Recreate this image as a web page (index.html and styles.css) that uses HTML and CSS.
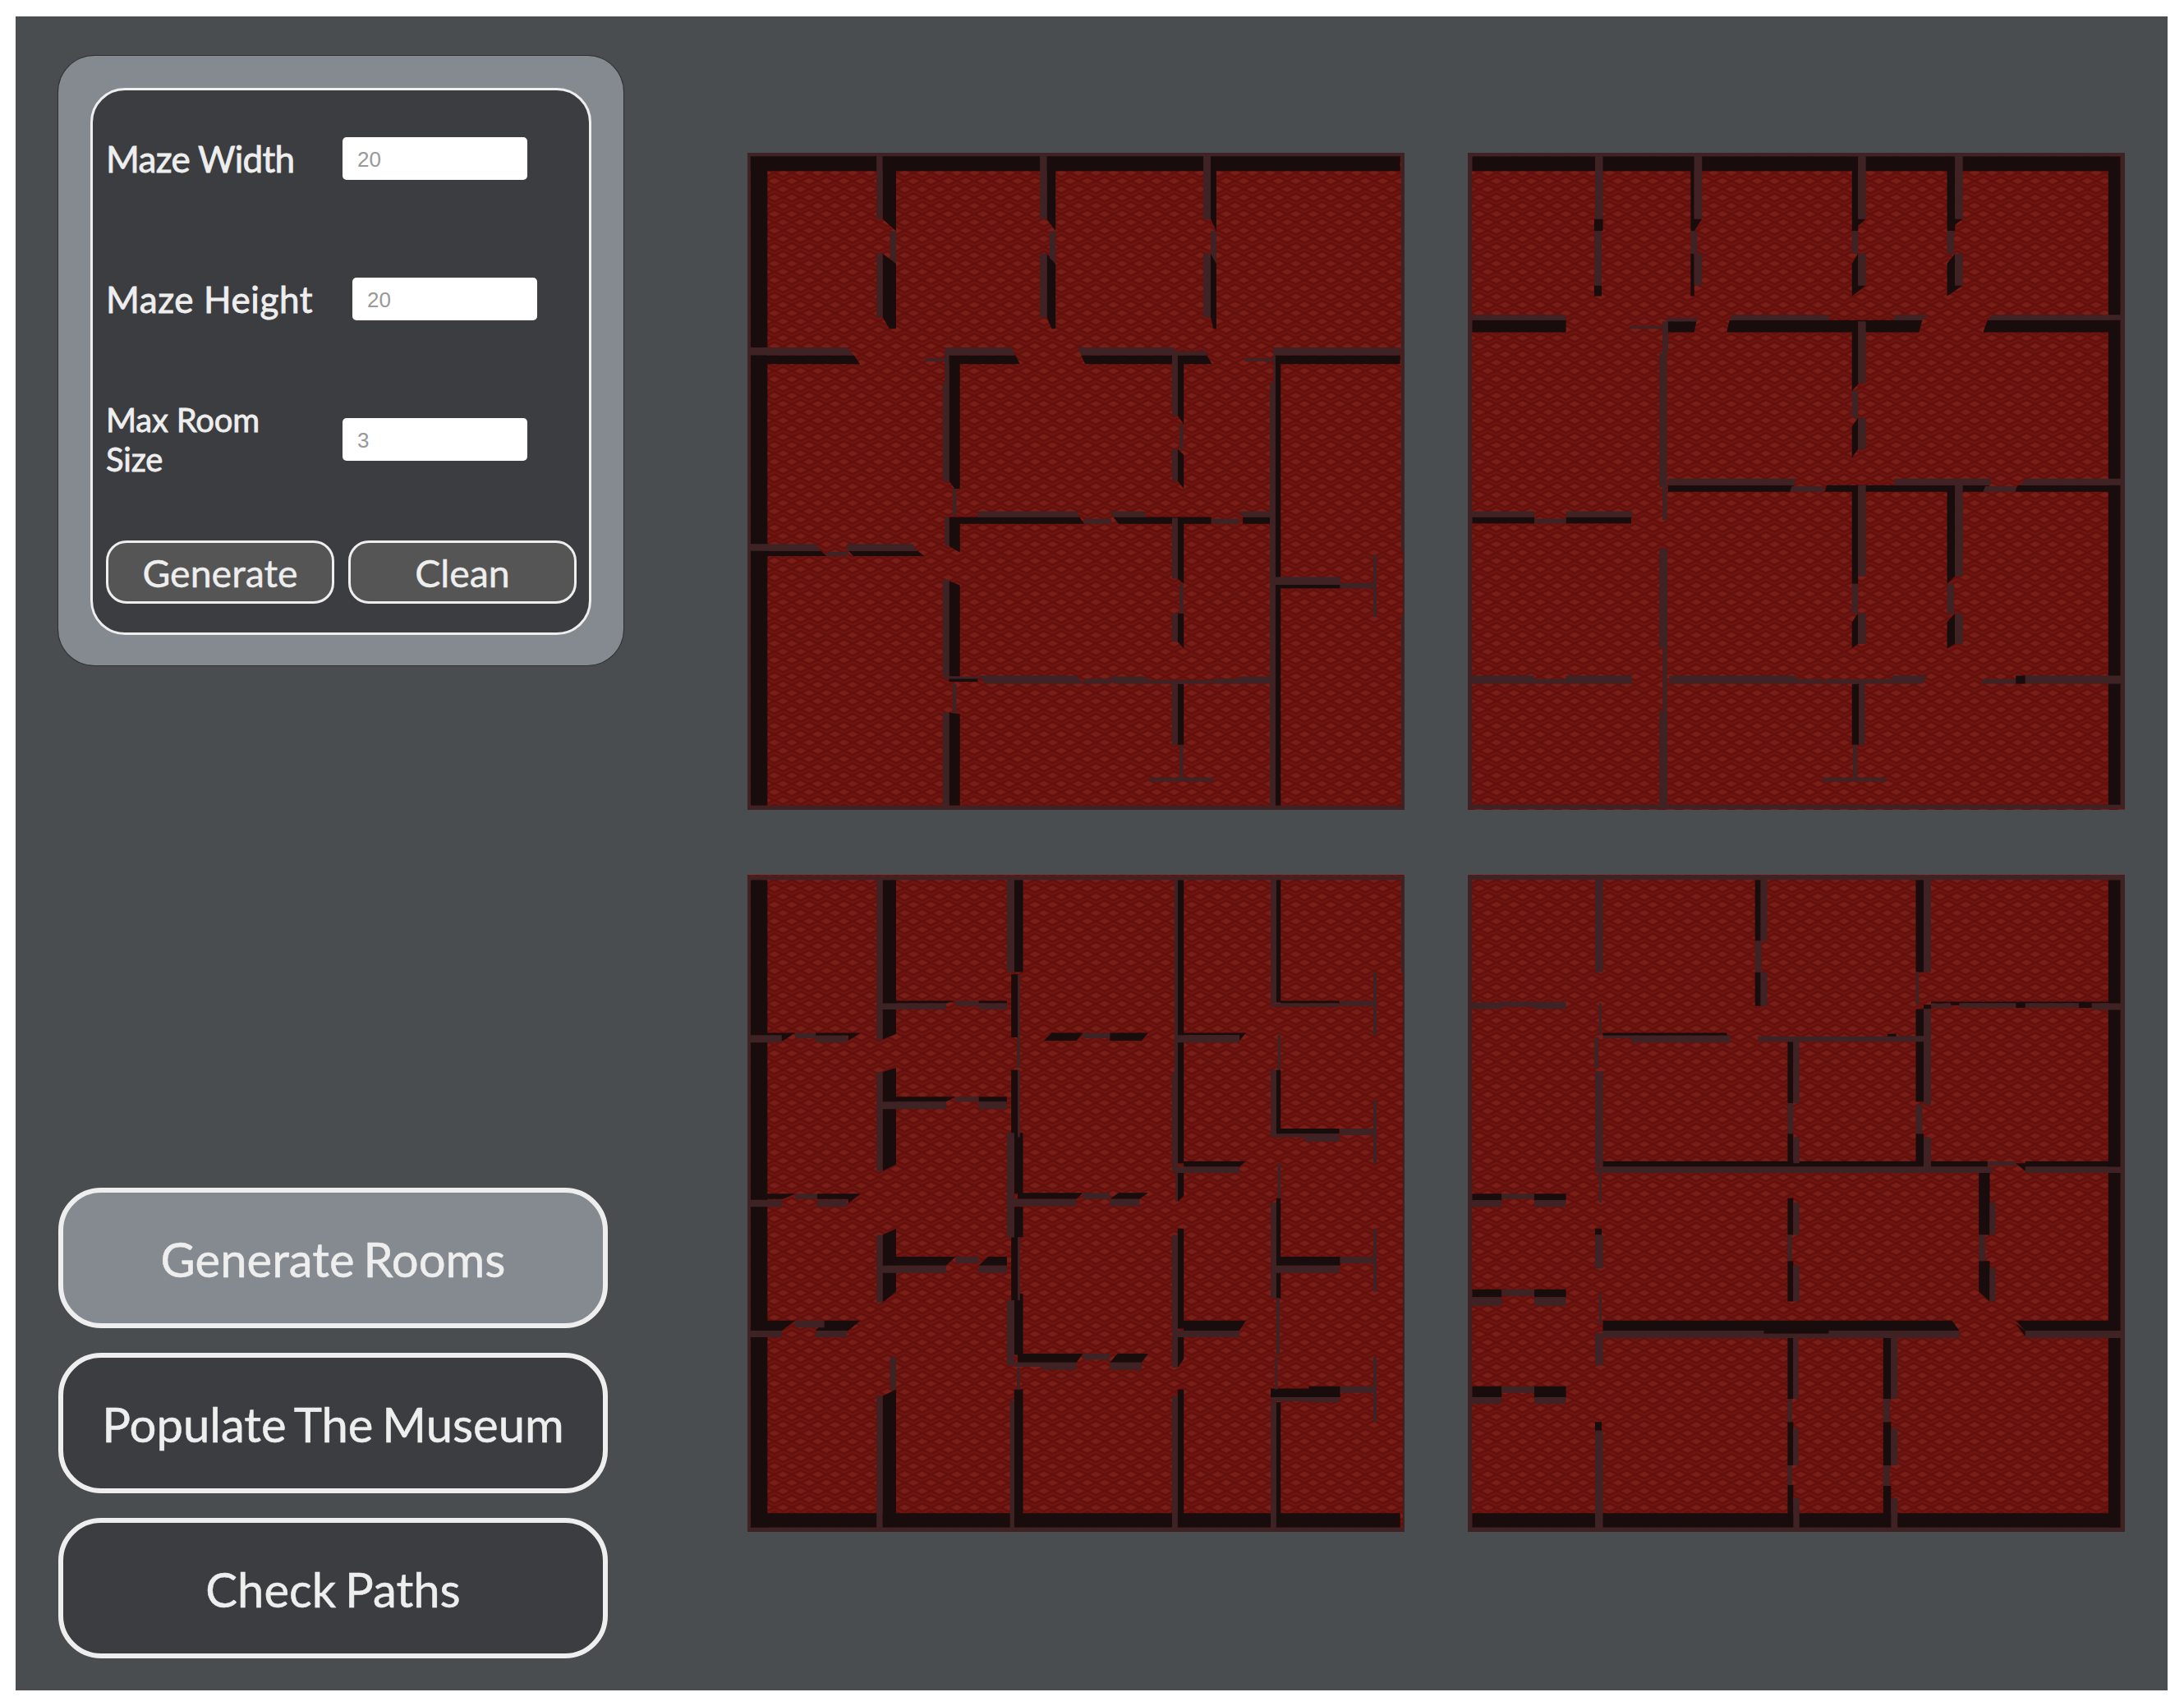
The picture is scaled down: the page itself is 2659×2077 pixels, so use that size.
FILE: index.html
```html
<!DOCTYPE html>
<html lang="en">
<head>
    <meta charset="UTF-8">
    <meta name="viewport" content="width=device-width, initial-scale=1.0">
    <title>Maze Museum</title>
    <link rel="stylesheet" href="styles.css">
</head>
<body>
    <svg class="defs" width="0" height="0" aria-hidden="true">
        <defs>
            <pattern id="carpet" patternUnits="userSpaceOnUse" width="40" height="38">
                <rect width="40" height="38" fill="#6e1611"/>
                <path d="M8 0L20 -6L32 0L20 6Z M8 38L20 32L32 38L20 44Z M-12 19L0 13L12 19L0 25Z M28 19L40 13L52 19L40 25Z" fill="#791f18"/>
                <path d="M0 0L20 -9.500L40 0L20 9.500Z M-20 19L0 9.500L20 19L0 28.500Z M20 19L40 9.500L60 19L40 28.500Z M0 38L20 28.500L40 38L20 47.500Z" fill="none" stroke="#640f0b" stroke-width="4"/>
            </pattern>
        </defs>
    </svg>

    <div class="stage">
        <div class="sidebar">
            <div class="settings-panel">
                <div class="settings-card">
                    <div class="form-row">
                        <label class="form-label" for="maze-width">Maze Width</label>
                        <input class="form-input" type="text" id="maze-width" placeholder="20">
                    </div>
                    <div class="form-row form-row-wide">
                        <label class="form-label" for="maze-height">Maze Height</label>
                        <input class="form-input" type="text" id="maze-height" placeholder="20">
                    </div>
                    <div class="form-row">
                        <label class="form-label form-label-small" for="max-room">Max Room Size</label>
                        <input class="form-input" type="text" id="max-room" placeholder="3">
                    </div>
                    <div class="button-group">
                        <button class="small-button" type="button">Generate</button>
                        <button class="small-button" type="button">Clean</button>
                    </div>
                </div>
            </div>

            <div class="action-list">
                <button class="action-button action-button-active" type="button">Generate Rooms</button>
                <button class="action-button" type="button">Populate The Museum</button>
                <button class="action-button" type="button">Check Paths</button>
            </div>
        </div>

        <div class="maze-grid">
            <!-- Maze 1 -->
            <svg class="maze" viewBox="18 30 1512 1512">
                <rect class="floor" x="18" y="30" width="1512" height="1512" fill="url(#carpet)"/>
                <path class="wall-dark" d="M22 36H1520V72H22Z M25 36H64V1532H25Z
                    M329 36H360V210L329 182Z M329 262L360 285V435H345L329 408Z
                    M707 36H727V210L707 182Z M707 262L727 285V435H718L707 408Z
                    M1084 36H1097V210L1084 182Z M1084 262L1097 285V435H1090L1084 408Z
                    M25 496H263L277 516H25Z M472 496H635L645 516H472Z M786 496H1075L1087 516H795Z M1228 496H1520V516H1228Z
                    M482 516H507V803H495L482 785Z
                    M482 868H782L793 884H482Z M860 868H1085V884H872Z M1158 868H1220V884H1158Z
                    M482 884H507V950L482 935Z M482 1015L507 1025V1235H482Z
                    M482 1240H548V1247H482Z M482 1318L507 1322V1532H482Z
                    M1008 516H1022V655L1008 635Z M1008 712L1022 725V803L1008 785Z
                    M1008 884H1022V1022L1008 1010Z M1008 1090H1022V1170L1008 1155Z
                    M1008 1252H1022V1392H1008Z
                    M1233 516H1245V1532H1233Z
                    M1245 1024H1382V1032H1245Z
                    M64 946H188L200 958H64Z M250 946H410L425 958H262Z"/>
                <path class="wall-light" d="M18 30H1530V38H18Z M18 30H25V1542H18Z M1522 30H1530V945H1522Z M1526 945H1530V1095H1526Z M1522 1095H1530V1542H1522Z M18 1532H1530V1542H18Z
                    M315 36H329V182H315Z M346 210H360V285L346 272Z M315 262H329V408H315Z
                    M691 36H707V182H691Z M713 210H727V285L713 272Z M691 262H707V408H691Z
                    M1067 36H1084V182H1067Z M1084 210H1097V285L1084 262Z M1067 262H1084V408H1067Z
                    M25 478H247L263 496H25Z M427 503H472V510H427Z M472 478H625L635 496H472Z M777 478H1000V496H786Z M1000 486H1075V496H1000Z M1162 503H1228V510H1162Z M1228 478H1520V496H1228Z
                    M472 496H482V560H472Z M467 560H482V785H467Z M490 803H499V865H490Z
                    M548 855H775L782 868H548Z M793 872H855V884H793Z M852 855H930L936 868H860Z M1087 872H1150V884H1087Z M1150 855H1220V868H1158Z
                    M472 868H482V935H472Z M467 1012H482V1235H467Z
                    M470 1235H548V1240H470Z M548 1233H775L793 1252H566Z M793 1240H855V1252H793Z M852 1235H930L945 1243H1085V1252H860Z M1087 1240H1150V1252H1087Z M1150 1235H1220V1252H1150Z
                    M490 1252H499V1318H490Z M467 1318H482V1532H467Z
                    M995 490H1008V635H995Z M1012 655H1021V712H1012Z M995 712H1008V785H995Z
                    M995 870H1008V1010H995Z M1012 1022H1021V1090H1012Z M995 1090H1008V1155H995Z
                    M995 1250H1008V1392H995Z M1012 1392H1021V1468H1012Z M942 1468H1090V1477H942Z
                    M1228 490H1233V560H1228Z M1220 560H1233V1532H1220Z
                    M1233 1006H1382V1024H1233Z M1382 1020H1463V1032H1382Z M1458 955H1466V1098H1458Z
                    M25 930H175L188 946H25Z M200 948H250V958H200Z M247 930H398L410 946H247Z"/>
            </svg>

            <!-- Maze 2 -->
            <svg class="maze" viewBox="14 30 1512 1512">
                <rect class="floor" x="14" y="30" width="1512" height="1512" fill="url(#carpet)"/>
                <path class="wall-dark" d="M24 38H1516V72H24Z M1488 38H1516V1532H1488Z
                    M305 182H325V210H305Z M305 335H322V360H305Z
                    M527 72H535V210H527Z M535 182H553L535 210Z M527 262H535V360H527Z
                    M898 72H912V210H898Z M912 182H930L898 210Z M898 285L912 262V335H930L898 360Z
                    M1117 72H1135V210H1117Z M1135 182H1153L1117 210Z M1117 285L1135 262V335H1153L1117 360Z
                    M24 415H240V443H24Z M472 418H540L535 443H472Z M616 415H1060L1052 443H610Z M1210 415H1488V443H1200Z
                    M898 443H914V560L898 578Z M898 660L912 640V712L898 732Z
                    M475 795H765L755 810H475Z M840 795H1215L1205 810H835Z M1280 795H1488V810H1272Z
                    M898 810H912V1022L898 1022Z M898 1110L912 1090V1160L898 1170Z
                    M1117 810H1135V1005L1117 1022Z M1117 1110L1135 1090V1160L1117 1170Z
                    M24 868H167V883H24Z M240 868H390V883H240Z
                    M1275 1233H1297V1252H1275Z
                    M898 1252H914V1392H898Z"/>
                <path class="wall-light" d="M14 30H1526V38H14Z M14 30H24V1540H14Z M1516 30H1526V1540H1516Z M14 1530H1526V1540H14Z
                    M307 36H325V182H307Z M305 210H322V335H305Z
                    M535 36H553V182H535Z M527 210H542V262H527Z M535 262H553V335H535Z
                    M912 36H930V182H912Z M898 210H912V262H898Z M912 262H930V335H912Z
                    M1135 36H1153V182H1135Z M1117 210H1133V262H1117Z M1135 262H1153V335H1135Z
                    M24 403H240V415H24Z M387 429H462V435H387Z M472 410H543V418H472Z M620 403H845V415H620Z M995 403H1072L1060 415H995Z M1220 403H1526V415H1210Z
                    M462 418H475V490H462Z M455 490H472V800H455Z M462 800H472V875H462Z M455 940H473V1170H455Z M462 1170H472V1315H462Z M455 1315H473V1532H455Z
                    M912 418H930V560H912Z M898 578H912V640H898Z M912 640H930V712H912Z
                    M475 780H770L765 795H475Z M760 797H832V810H755Z M995 780H1220L1215 795H995Z M1205 797H1275V810H1200Z M1298 780H1516V795H1285Z
                    M912 795H930V1005H912Z M898 1022H912V1090H898Z M912 1090H930V1160H912Z
                    M1135 795H1153V1005H1135Z M1117 1022H1133V1090H1117Z M1135 1090H1153V1160H1135Z
                    M24 855H167V868H24Z M167 872H240V883H167Z M240 855H393V868H240Z
                    M24 1233H167V1252H24Z M167 1241H240V1252H167Z M240 1233H392V1252H240Z M478 1233H770V1252H478Z M770 1241H832V1252H770Z M835 1241H990V1252H835Z M990 1233H1072L1060 1252H990Z M1197 1241H1275V1252H1197Z M1297 1233H1516V1252H1297Z
                    M914 1245H928V1392H914Z M900 1392H910V1468H900Z M830 1468H978V1477H830Z"/>
            </svg>

            <!-- Maze 3 -->
            <svg class="maze" viewBox="18 26 1512 1512">
                <rect class="floor" x="18" y="26" width="1512" height="1512" fill="url(#carpet)"/>
                <path class="wall-dark" d="M25 38H64V1530H25Z M25 1495H1520V1528H25Z
                    M329 38H360V392L329 405Z M329 480L360 470V692L329 708Z M329 855L360 840V985L329 1010Z M329 1225L360 1210V1495H329Z
                    M632 38H652V250H632Z M625 255H640V400H625Z M625 475H640V630H625Z M632 620H652V760H632Z M632 790H652V860H632Z M625 860H640V1005H625Z M632 990H652V1130H632Z M632 1210H652V1495H632Z
                    M1008 38H1022V690H1008Z M1008 712H1022V765L1008 778Z M1008 840H1022V1070H1008Z M1008 1090H1022V1140L1008 1160Z M1008 1210H1022V1495H1008Z
                    M1235 38H1245V320H1235Z M1235 475H1245V630H1235Z M1235 770H1245V1000L1235 1010Z M1235 1240H1245V1495H1235Z
                    M64 390H128L100 408H64Z M175 390H278L250 408V396H175Z
                    M64 760H128L100 772H64Z M178 760H278L250 782V772H178Z
                    M64 1052H128L97 1075H64Z M195 1052H278L250 1075H175Z
                    M360 316H497L475 322H360Z M550 316H615V322H550Z
                    M360 537H497L475 548H360Z M550 537H615V548H550Z
                    M360 905H497L475 925H360Z M572 905H615V925H550Z
                    M718 390H790L775 408H700Z M852 390H940L925 408H852Z
                    M640 758H790L775 772H640Z M872 758H940L920 772H852Z
                    M640 1128H790L775 1148H640Z M870 1128H940L925 1148H852Z
                    M1022 390H1165L1150 408V395H1022Z M1022 685H1165L1150 698H1022Z M1022 1052H1165L1150 1075H1022Z
                    M1245 316H1380V322H1245Z M1245 610H1380V622H1245Z M1245 905H1382V925H1245Z M1222 1208H1310V1203H1382V1228H1222Z"/>
                <path class="wall-light" d="M18 30H1530V38H18Z M18 30H25V1538H18Z M18 1528H1530V1538H18Z M1522 30H1530V250H1522Z M1526 250H1530V1528H1526Z
                    M315 38H329V405H315Z M315 480H329V708H315Z M315 855H329V1010H315Z M346 1135H360V1210H346Z M315 1225H329V1530H315Z
                    M615 38H632V250H615Z M640 255H645V400H640Z M638 400H645V470H638Z M640 475H645V630H640Z M615 620H632V860H615Z M640 860H645V1005H640Z M615 1005H632V1155H615Z M638 1160H645V1210H638Z M622 1235H632V1530H622Z
                    M1000 38H1008V480H1000Z M995 480H1008V710H995Z M1003 712H1008V778H1003Z M995 855H1008V1160H995Z M995 1225H1008V1530H995Z
                    M1222 38H1235V320H1222Z M1238 395H1245V475H1238Z M1222 475H1235V630H1222Z M1238 690H1245V770H1238Z M1222 780H1235V1000H1222Z M1235 1000H1243V1130H1235Z M1232 1135H1238V1210H1232Z M1222 1240H1235V1528H1222Z
                    M25 395H97V412H25Z M128 390H175V402H128Z M175 396H247V412H175Z
                    M25 774H97V790H25Z M128 760H178V772H128Z M178 774H247V790H178Z
                    M25 1075H97V1090H25Z M128 1052H195V1068H128Z M175 1075H247V1090H175Z
                    M329 322H475V336H329Z M497 316H550V328H497Z M550 322H615V336H550Z
                    M329 548H475V565H329Z M497 537H550V548H497Z M550 548H615V565H550Z
                    M329 925H475V942H329Z M497 905H550V920H497Z M550 925H615V942H550Z
                    M790 390H852V402H790Z M632 772H775V788H632Z M790 758H852V772H790Z M852 772H920V788H852Z
                    M632 1148H695V1158H632Z M695 1148H775V1165H695Z M790 1128H852V1142H790Z M852 1148H925V1165H852Z
                    M1008 395H1150V412H1008Z M1008 698H1150V712H1008Z M1008 1075H1150V1090H1008Z
                    M1222 322H1380V330H1222Z M1382 316H1463V328H1382Z M1458 250H1466V395H1458Z
                    M1222 622H1300V630H1222Z M1300 622H1380V640H1300Z M1382 610H1463V625H1382Z M1458 545H1466V690H1458Z
                    M1235 925H1380V942H1235Z M1382 905H1463V920H1382Z M1458 840H1466V985H1458Z
                    M1222 1228H1300V1238H1222Z M1300 1228H1380V1240H1300Z M1382 1203H1463V1218H1382Z M1458 1135H1466V1285H1458Z"/>
            </svg>

            <!-- Maze 4 -->
            <svg class="maze" viewBox="14 26 1512 1512">
                <rect class="floor" x="14" y="26" width="1512" height="1512" fill="url(#carpet)"/>
                <path class="wall-dark" d="M1488 38H1516V1530H1488Z M24 1495H1516V1528H24Z
                    M307 840H322V855H307Z M307 1285H322V1305H307Z
                    M675 38H688V178H675Z M675 250H688V328H675Z
                    M1045 38H1063V250H1045Z M1063 325H1080V335H1063Z M1045 335H1063V548H1045Z M1045 622H1063V690H1045Z
                    M1080 318H1488V322H1080Z M1275 318H1297V332H1275Z M1420 318H1450V332H1420Z M1125 318H1145V326H1125Z
                    M325 390H610V396H325Z M980 392H1000V408H980Z
                    M750 410H763V552H750Z M750 622H763V690H750Z
                    M325 685H1210V698H325Z M1275 690H1297L1297 708Z M1297 685H1488V698H1297Z
                    M750 770H763V855H750Z M750 915H763V1008H750Z
                    M1190 712H1215V855H1190Z M1190 915H1215V1008L1190 985Z
                    M24 760H92V775H24Z M167 760H240V775H167Z
                    M24 980H92V998H24Z M167 980H240V998H167Z
                    M24 1203H92V1228H24Z M167 1203H240V1228H167Z
                    M325 1052H1128L1145 1075H325Z M695 1060H845V1082H695Z M1275 1052H1488V1075H1297Z M1275 1060L1297 1075V1088Z
                    M750 1092H763V1232H750Z M750 1285H763V1385H750Z M750 1430H763V1495H750Z
                    M970 1092H988V1232H970Z M970 1285H988V1385H970Z M970 1432H988V1495H970Z"/>
                <path class="wall-light" d="M14 28H1526V38H14Z M14 28H24V1538H14Z M1516 28H1526V1538H1516Z M14 1528H1526V1538H14Z
                    M307 38H325V250H307Z M316 322H322V395H316Z M305 400H315V470H305Z M307 478H325V695H307Z M316 710H322V780H316Z M307 855H325V932H307Z M316 990H322V1060H316Z M307 1080H325V1155H307Z M307 1305H325V1530H307Z
                    M688 38H703V178H688Z M675 178H690V250H675Z M688 250H703V328H688Z
                    M1063 38H1080V250H1063Z M1045 250H1052V325H1045Z M1063 335H1080V555H1063Z M1045 555H1060V622H1045Z M1063 630H1080V710H1063Z
                    M1080 323H1125V332H1080Z M1145 322H1275V332H1145Z M1297 322H1420V332H1297Z M1450 322H1516V337H1450Z
                    M325 396H390V402H325Z M390 396H618V412H390Z M682 398H1000V410H682Z M1000 397H1063V410H1000Z
                    M763 410H777V552H763Z M750 552H763V622H750Z M763 630H777V690H763Z
                    M307 698H1220V712H307Z M1210 685H1275V695H1210Z M1297 698H1516V712H1297Z
                    M763 780H777V855H763Z M750 855H760V915H750Z M763 925H777V1008H763Z
                    M1215 780H1228V855H1215Z M1190 855H1205V915H1190Z M1215 930H1228V1008H1215Z
                    M24 320H92V335H24Z M92 318H167V330H92Z M167 318H240V335H167Z
                    M24 775H92V790H24Z M92 760H167V772H92Z M167 775H240V790H167Z
                    M24 998H92V1018H24Z M92 980H167V995H92Z M167 998H240V1018H167Z
                    M24 1228H92V1243H24Z M92 1203H167V1218H92Z M167 1228H240V1243H167Z
                    M325 1075H695V1092H325Z M845 1075H1145V1092H845Z M695 1082H845V1092H695Z M1297 1075H1516V1092H1297Z
                    M763 1092H775V1232H763Z M750 1232H760V1285H750Z M763 1300H775V1385H763Z M750 1385H760V1430H750Z M763 1460H777V1530H763Z
                    M988 1092H1003V1232H988Z M970 1232H985V1285H970Z M988 1300H1003V1385H988Z M970 1385H985V1432H970Z M988 1460H1003V1530H988Z"/>
            </svg>
        </div>
    </div>
</body>
</html>
```

FILE: styles.css
```css
/* General Styles */
body {
    margin: 0;
    padding: 20px 19px 19px;
    background-color: #fff;
    font-family: Lato, "Open Sans", sans-serif;
    color: #eee;
}

.defs {
    position: absolute;
}

.stage {
    display: flex;
    width: 2620px;
    height: 2038px;
    box-sizing: border-box;
    padding: 48px 0 39px 52px;
    background-color: #4a4d50;
}

/* Sidebar */
.sidebar {
    display: flex;
    flex-direction: column;
    justify-content: space-between;
    width: 688px;
    margin-right: 151px;
}

.settings-panel {
    box-sizing: border-box;
    width: 688px;
    height: 742px;
    padding: 39px 39px 37px;
    background-color: #858a91;
    border-radius: 44px;
    box-shadow: 0 0 0 1px #2f3032;
}

.settings-card {
    box-sizing: border-box;
    height: 666px;
    padding: 57px 14px 0 16px;
    background-color: #3c3d40;
    border: 3px solid #eee;
    border-radius: 42px;
}

.form-row {
    display: flex;
    align-items: center;
    height: 52px;
    margin-bottom: 119px;
}

.form-label {
    width: 288px;
    flex-shrink: 0;
    font-size: 44px;
    line-height: 48px;
    letter-spacing: -0.7px;
    -webkit-text-stroke: 0.8px #eee;
}

.form-row-wide .form-label {
    width: 300px;
    letter-spacing: 0.6px;
}

.form-label-small {
    padding-right: 60px;
    box-sizing: border-box;
    font-size: 40px;
    letter-spacing: -0.2px;
}

.form-input {
    width: 225px;
    height: 52px;
    box-sizing: border-box;
    padding: 2px 0 0 18px;
    border: 0;
    border-radius: 5px;
    background-color: #fff;
    font-family: "Liberation Sans", Arial, sans-serif;
    font-size: 26px;
}

.form-input::placeholder {
    color: #999;
}

.button-group {
    display: flex;
    gap: 17px;
    margin-top: -22px;
}

.small-button {
    width: 278px;
    height: 77px;
    padding: 0;
    background-color: #555;
    border: 3px solid #eee;
    border-radius: 25px;
    font-family: inherit;
    font-size: 46.5px;
    color: #eee;
    -webkit-text-stroke: 0.4px #eee;
}

/* Main actions */
.action-list {
    display: flex;
    flex-direction: column;
    gap: 30px;
}

.action-button {
    width: 669px;
    height: 171px;
    padding: 2px 0 0;
    background-color: #3c3d40;
    border: 6px solid #eee;
    border-radius: 52px;
    font-family: inherit;
    font-size: 58px;
    word-spacing: -4px;
    color: #eee;
    -webkit-text-stroke: 0.5px #eee;
}

.action-button-active {
    background-color: #858a91;
}

/* Maze previews */
.maze-grid {
    display: grid;
    grid-template-columns: 800px 800px;
    grid-template-rows: 800px 800px;
    column-gap: 77px;
    row-gap: 79px;
    margin-top: 118px;
}

.maze {
    display: block;
    width: 800px;
    height: 800px;
    filter: blur(0.7px);
}

.floor {
    filter: blur(1.5px);
}

.wall-dark {
    fill: #190c0c;
}

.wall-light {
    fill: #3f2224;
}
```
